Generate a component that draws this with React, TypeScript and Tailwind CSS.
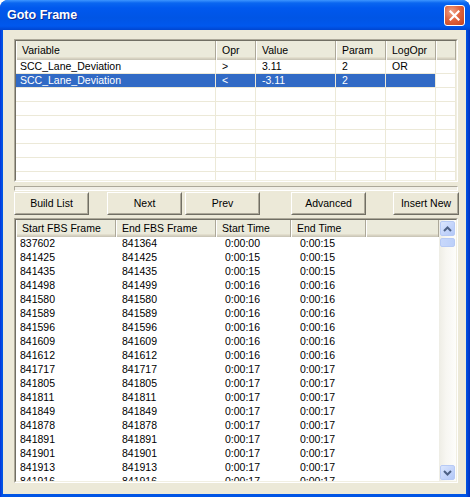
import React from "react";

const topCols = [
  { name: "Variable", w: 200 },
  { name: "Opr", w: 40 },
  { name: "Value", w: 80 },
  { name: "Param", w: 50 },
  { name: "LogOpr", w: 50 },
];

const topRows = [
  { v: ["SCC_Lane_Deviation", ">", "3.11", "2", "OR"], sel: false },
  { v: ["SCC_Lane_Deviation", "<", "-3.11", "2", ""], sel: true },
];

const botCols = [
  { name: "Start FBS Frame", w: 100 },
  { name: "End FBS Frame", w: 100 },
  { name: "Start Time", w: 75 },
  { name: "End Time", w: 75 },
];

const botRows: string[][] = [
  ["837602", "841364", "0:00:00", "0:00:15"],
  ["841425", "841425", "0:00:15", "0:00:15"],
  ["841435", "841435", "0:00:15", "0:00:15"],
  ["841498", "841499", "0:00:16", "0:00:16"],
  ["841580", "841580", "0:00:16", "0:00:16"],
  ["841589", "841589", "0:00:16", "0:00:16"],
  ["841596", "841596", "0:00:16", "0:00:16"],
  ["841609", "841609", "0:00:16", "0:00:16"],
  ["841612", "841612", "0:00:16", "0:00:16"],
  ["841717", "841717", "0:00:17", "0:00:17"],
  ["841805", "841805", "0:00:17", "0:00:17"],
  ["841811", "841811", "0:00:17", "0:00:17"],
  ["841849", "841849", "0:00:17", "0:00:17"],
  ["841878", "841878", "0:00:17", "0:00:17"],
  ["841891", "841891", "0:00:17", "0:00:17"],
  ["841901", "841901", "0:00:17", "0:00:17"],
  ["841913", "841913", "0:00:17", "0:00:17"],
  ["841916", "841916", "0:00:17", "0:00:17"],
];

function HeaderCell({ name, w, last }: { name?: string; w?: number; last?: boolean }) {
  return (
    <div
      className={`h-full flex items-center pl-[6px] border-r border-r-[#aca899] shadow-[inset_1px_0_0_#ffffff] whitespace-nowrap overflow-hidden ${last ? "flex-1" : "shrink-0"}`}
      style={w ? { width: w } : undefined}
    >
      {name}
    </div>
  );
}

function Header({ cols, h }: { cols: { name: string; w: number }[]; h: string }) {
  return (
    <div className={`${h} flex shrink-0 bg-[#ebeadb] shadow-[inset_0_-1px_0_#cbc7b8,inset_0_-2px_0_#d6d2c2,inset_0_-3px_0_#e2decd]`}>
      {cols.map((c) => (
        <HeaderCell key={c.name} name={c.name} w={c.w} />
      ))}
      <HeaderCell last />
    </div>
  );
}

function Sunken({ className, children }: { className: string; children: React.ReactNode }) {
  return (
    <div className={`${className} border border-t-[#aca899] border-l-[#aca899] border-b-white border-r-white`}>
      <div className="w-full h-full border border-t-[#716f64] border-l-[#716f64] border-b-[#f1efe2] border-r-[#f1efe2] bg-white overflow-hidden flex flex-col">
        {children}
      </div>
    </div>
  );
}

function Btn({ label, className }: { label: string; className: string }) {
  return (
    <div className={`${className} h-[23px] shrink-0 border border-t-white border-l-white border-b-[#716f64] border-r-[#716f64]`}>
      <div className="w-full h-full flex items-center justify-center border border-t-[#ece9d8] border-l-[#ece9d8] border-b-[#aca899] border-r-[#aca899] bg-[#ece9d8] text-black">
        {label}
      </div>
    </div>
  );
}

function ScrollBtn({ up }: { up: boolean }) {
  return (
    <div className="w-[17px] h-[17px] shrink-0 flex items-center justify-center">
      <div className="w-[15px] h-[15px] rounded-[2px] border border-[#b7caf5] bg-[linear-gradient(135deg,#dce7fd_0%,#c6d6fb_50%,#b3c8f7_100%)] flex items-center justify-center">
        <svg width="9" height="6" viewBox="0 0 9 6">
          {up ? (
            <path d="M1 5 L4.5 1.5 L8 5" fill="none" stroke="#4d6185" strokeWidth="2" />
          ) : (
            <path d="M1 1 L4.5 4.5 L8 1" fill="none" stroke="#4d6185" strokeWidth="2" />
          )}
        </svg>
      </div>
    </div>
  );
}

export default function App() {
  return (
    <div className="w-[470px] h-[497px] flex flex-col rounded-t-[8px] overflow-hidden bg-[linear-gradient(to_right,#0831d9_0px,#0055e5_2px,#0055e5_466px,#0030c0_470px)] font-['Liberation_Sans',Arial,sans-serif] text-[10.5px] text-black">
      {/* Title bar */}
      <div className="h-[30px] shrink-0 flex items-center justify-between pl-[7px] pr-[5px] bg-[linear-gradient(to_bottom,#3d95ff_0px,#0a66f0_3px,#0058ee_8px,#0055e5_18px,#0058ee_26px,#0046d0_30px)]">
        <span className="text-white font-bold text-[12.5px] font-['Liberation_Sans',Arial,sans-serif] [text-shadow:1px_1px_0_#0b2a8e]">
          Goto Frame
        </span>
        <div className="w-[21px] h-[21px] rounded-[3px] border border-white bg-[radial-gradient(circle_at_35%_30%,#f0a488_0%,#e0643f_45%,#c4421f_100%)] flex items-center justify-center">
          <svg width="11" height="11" viewBox="0 0 11 11">
            <path d="M1.5 1.5 L9.5 9.5 M9.5 1.5 L1.5 9.5" stroke="#ffffff" strokeWidth="2.2" strokeLinecap="square" />
          </svg>
        </div>
      </div>

      {/* Client area */}
      <div className="flex-1 ml-[3px] mr-[4px] mb-[3px] bg-[#ece9d8] flex flex-col pl-[11px] pt-[9px]">
        {/* Top list */}
        <Sunken className="w-[444px] h-[143px] shrink-0">
          <Header cols={topCols} h="h-[19px]" />
          {[0, 1, 2, 3, 4, 5, 6, 7, 8].map((i) => {
            const r = topRows[i];
            return (
              <div key={i} className="h-[14px] shrink-0 flex">
                {topCols.map((c, j) => (
                  <div
                    key={c.name}
                    className={`h-full shrink-0 border-b border-r border-[#ece9d8] flex items-center whitespace-nowrap ${j === 0 ? "pl-[4px]" : "pl-[6px]"} ${r && r.sel ? "bg-[#316ac5] text-white" : ""}`}
                    style={{ width: c.w }}
                  >
                    {r ? r.v[j] : ""}
                  </div>
                ))}
                <div className="h-full flex-1 border-b border-r border-[#ece9d8]" />
              </div>
            );
          })}
        </Sunken>

        {/* strip */}
        <div className="w-[444px] h-[5px] mt-[4px] shrink-0 border border-t-[#aca899] border-l-[#aca899] border-b-white border-r-white bg-[#f1efe6]" />

        {/* Buttons */}
        <div className="w-[444px] mt-[1px] flex shrink-0">
          <Btn label="Build List" className="w-[75px]" />
          <Btn label="Next" className="w-[75px] ml-[18px]" />
          <Btn label="Prev" className="w-[75px] ml-[3px]" />
          <Btn label="Advanced" className="w-[75px] ml-[31px]" />
          <Btn label="Insert New" className="w-[66px] ml-[27px]" />
        </div>

        {/* Bottom list */}
        <Sunken className="w-[444px] h-[265px] mt-[3px] shrink-0">
          <div className="flex flex-1 min-h-0">
            <div className="flex-1 flex flex-col min-w-0 overflow-hidden">
              <Header cols={botCols} h="h-[17px]" />
              {botRows.map((r, i) => (
                <div key={i} className="h-[14px] shrink-0 flex">
                  {botCols.map((c, j) => (
                    <div
                      key={c.name}
                      className={`h-full shrink-0 flex items-center whitespace-nowrap ${j === 0 ? "pl-[4px]" : j === 1 ? "pl-[6px]" : "pl-[9px]"}`}
                      style={{ width: c.w }}
                    >
                      {r[j]}
                    </div>
                  ))}
                </div>
              ))}
            </div>
            {/* Scrollbar */}
            <div className="w-[17px] flex flex-col bg-[linear-gradient(to_right,#eeede5_0%,#f7f6f1_40%,#fdfdfb_100%)]">
              <ScrollBtn up />
              <div className="h-[9px] mx-[1px] mt-[1px] rounded-[2px] border border-[#b7caf5] bg-[linear-gradient(to_right,#c8d8fb,#bcd0fa)]" />
              <div className="flex-1" />
              <ScrollBtn up={false} />
            </div>
          </div>
        </Sunken>
      </div>
    </div>
  );
}
